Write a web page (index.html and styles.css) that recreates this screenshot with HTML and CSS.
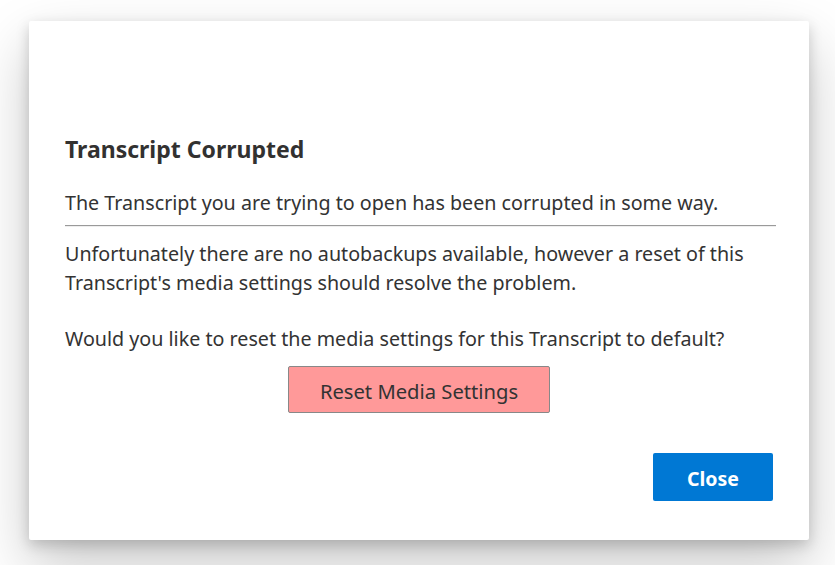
FILE: index.html
```html
<!DOCTYPE html>
<html>
<head>
<meta charset="utf-8">
<link rel="stylesheet" href="styles.css">
</head>
<body>
<div class="dialog">
  <div class="content">
    <h2 class="title">Transcript Corrupted</h2>
    <p class="text lead">The Transcript you are trying to open has been corrupted in some way.</p>
    <hr class="divider">
    <p class="text">Unfortunately there are no autobackups available, however a reset of this Transcript's media settings should resolve the problem.</p>
    <p class="text question">Would you like to reset the media settings for this Transcript to default?</p>
    <div class="center">
      <button class="reset-btn">Reset Media Settings</button>
    </div>
  </div>
  <div class="footer">
    <button class="close-btn">Close</button>
  </div>
</div>
</body>
</html>
```
FILE: styles.css
```css
html, body {
  margin: 0;
  padding: 0;
  background: #ffffff;
  width: 835px;
  height: 565px;
  overflow: hidden;
}
body {
  font-family: "Noto Sans", "Open Sans", sans-serif;
  color: #333333;
}
.dialog {
  box-sizing: border-box;
  margin: 21px 0 0 29px;
  width: 780px;
  height: 519px;
  background: #ffffff;
  border-radius: 2px;
  box-shadow: 0 25px 58px rgba(0,0,0,0.22), 0 5px 14px rgba(0,0,0,0.18);
  padding: 114px 36px 39px 36px;
  display: flex;
  flex-direction: column;
}
.content {
  flex: 1;
}
.title {
  margin: 0;
  font-size: 23px;
  line-height: 28px;
  font-weight: 700;
  color: #323130;
}
.text {
  margin: 0;
  font-size: 19.7px;
  line-height: 29px;
}
.lead {
  margin-top: 25px;
}
.divider {
  margin: 8px -3px 12px 0;
  border: 0;
  border-top: 1px solid #9a9a9a;
  border-bottom: 1px solid #eeeeee;
  height: 0;
}
.question {
  margin-top: 27px;
}
.center {
  display: flex;
  justify-content: center;
  margin-top: 13px;
}
.reset-btn {
  box-sizing: border-box;
  width: 262px;
  height: 47px;
  padding: 3px 0 0 0;
  background: #ff9999;
  border: 1px solid #888888;
  border-radius: 2px;
  font-family: inherit;
  font-size: 20.2px;
  color: #333333;
}
.footer {
  display: flex;
  justify-content: flex-end;
}
.close-btn {
  box-sizing: border-box;
  width: 120px;
  height: 48px;
  padding: 2px 0 0 0;
  background: #0078d4;
  border: 0;
  border-radius: 2px;
  color: #ffffff;
  font-family: inherit;
  font-size: 19.5px;
  font-weight: 700;
}
```
